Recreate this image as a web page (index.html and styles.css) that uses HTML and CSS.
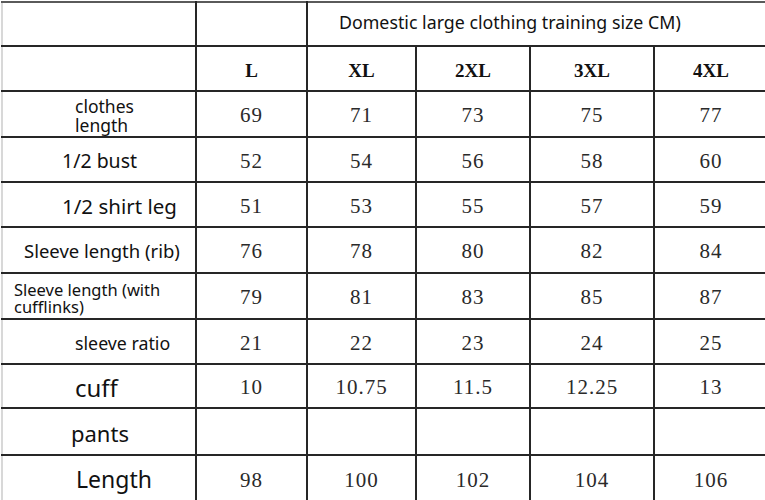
FILE: index.html
```html
<!DOCTYPE html>
<html>
<head>
<meta charset="utf-8">
<link rel="stylesheet" href="styles.css">
</head>
<body>
<table class="size-table">
  <colgroup>
    <col class="c-label"><col class="c-l"><col class="c-xl"><col class="c-2xl"><col class="c-3xl"><col class="c-4xl">
  </colgroup>
  <tr class="r-title">
    <td></td>
    <td></td>
    <td colspan="4" class="title">Domestic large clothing training size CM)</td>
  </tr>
  <tr class="r-head">
    <td></td>
    <th>L</th><th>XL</th><th>2XL</th><th>3XL</th><th>4XL</th>
  </tr>
  <tr class="r1">
    <td class="label lb-clothes">clothes<br>length</td>
    <td class="num">69</td><td class="num">71</td><td class="num">73</td><td class="num">75</td><td class="num">77</td>
  </tr>
  <tr class="r2">
    <td class="label lb-bust">1/2 bust</td>
    <td class="num">52</td><td class="num">54</td><td class="num">56</td><td class="num">58</td><td class="num">60</td>
  </tr>
  <tr class="r3">
    <td class="label lb-leg">1/2 shirt leg</td>
    <td class="num">51</td><td class="num">53</td><td class="num">55</td><td class="num">57</td><td class="num">59</td>
  </tr>
  <tr class="r4">
    <td class="label lb-rib">Sleeve length (rib)</td>
    <td class="num">76</td><td class="num">78</td><td class="num">80</td><td class="num">82</td><td class="num">84</td>
  </tr>
  <tr class="r5">
    <td class="label lb-cufflinks">Sleeve length (with<br>cufflinks)</td>
    <td class="num">79</td><td class="num">81</td><td class="num">83</td><td class="num">85</td><td class="num">87</td>
  </tr>
  <tr class="r6">
    <td class="label lb-ratio">sleeve ratio</td>
    <td class="num">21</td><td class="num">22</td><td class="num">23</td><td class="num">24</td><td class="num">25</td>
  </tr>
  <tr class="r7">
    <td class="label lb-cuff">cuff</td>
    <td class="num">10</td><td class="num">10.75</td><td class="num">11.5</td><td class="num">12.25</td><td class="num">13</td>
  </tr>
  <tr class="r8">
    <td class="label lb-pants">pants</td>
    <td></td><td></td><td></td><td></td><td></td>
  </tr>
  <tr class="r9">
    <td class="label lb-length">Length</td>
    <td class="num">98</td><td class="num">100</td><td class="num">102</td><td class="num">104</td><td class="num">106</td>
  </tr>
</table>
</body>
</html>
```
FILE: styles.css
```css
html, body {
  margin: 0;
  padding: 0;
  background: #ffffff;
  overflow: hidden;
}

.size-table {
  border-collapse: collapse;
  table-layout: fixed;
  width: 766px;
  margin: 1px 0 0 1px;
  color: #111;
}

.c-label { width: 194px; }
.c-l { width: 111px; }
.c-xl { width: 109px; }
.c-2xl { width: 114px; }
.c-3xl { width: 124px; }
.c-4xl { width: 114px; }

.size-table td,
.size-table th {
  border: 2px solid #262626;
  padding: 0;
  vertical-align: middle;
}

.size-table tr > :first-child {
  border-left: 2px solid #d8d8d8;
}

.size-table tr:first-child > * {
  border-top: 2px solid #5a5a5a;
}

.size-table tr:last-child > * {
  border-bottom: none;
}

.r-title { height: 44px; }
.r-head { height: 45px; }
.r1 { height: 46px; }
.r2 { height: 45px; }
.r3 { height: 45px; }
.r4 { height: 46px; }
.r5 { height: 46px; }
.r6 { height: 45px; }
.r7 { height: 44px; }
.r8 { height: 47px; }
.r9 { height: 46px; }

.title {
  font-family: "Noto Sans", "Open Sans", sans-serif;
  font-size: 17.8px;
  text-align: left;
  padding-left: 31px !important;
  padding-bottom: 4px !important;
}

.r-head th {
  font-family: "Liberation Serif", serif;
  font-weight: bold;
  font-size: 19px;
  text-align: center;
  padding-top: 4px;
}

.num {
  font-family: "Liberation Serif", serif;
  font-size: 21px;
  letter-spacing: 1px;
  text-align: center;
  color: #2a2a2a;
  padding-top: 3px !important;
}

.label {
  font-family: "Noto Sans", "Open Sans", sans-serif;
  text-align: left;
  color: #111;
  white-space: nowrap;
}

.lb-clothes {
  font-size: 17.5px;
  line-height: 19px;
  padding-left: 72px !important;
  padding-top: 4px !important;
}
.lb-bust {
  font-size: 19.5px;
  padding-left: 59px !important;
  padding-top: 2px !important;
}
.lb-leg {
  font-size: 20.5px;
  padding-left: 59px !important;
  padding-top: 3px !important;
}
.lb-rib {
  font-size: 18.5px;
  padding-left: 21px !important;
}
.lb-cufflinks {
  font-size: 16.5px;
  line-height: 17px;
  padding-left: 11px !important;
  padding-top: 3px !important;
}
.lb-ratio {
  font-size: 17.8px;
  padding-left: 72px !important;
  padding-top: 2px !important;
}
.lb-cuff {
  font-size: 24px;
  padding-left: 72px !important;
  padding-top: 2px !important;
}
.lb-pants {
  font-size: 22px;
  padding-left: 68px !important;
  padding-top: 2px !important;
}
.lb-length {
  font-size: 23px;
  padding-left: 73px !important;
}
```
